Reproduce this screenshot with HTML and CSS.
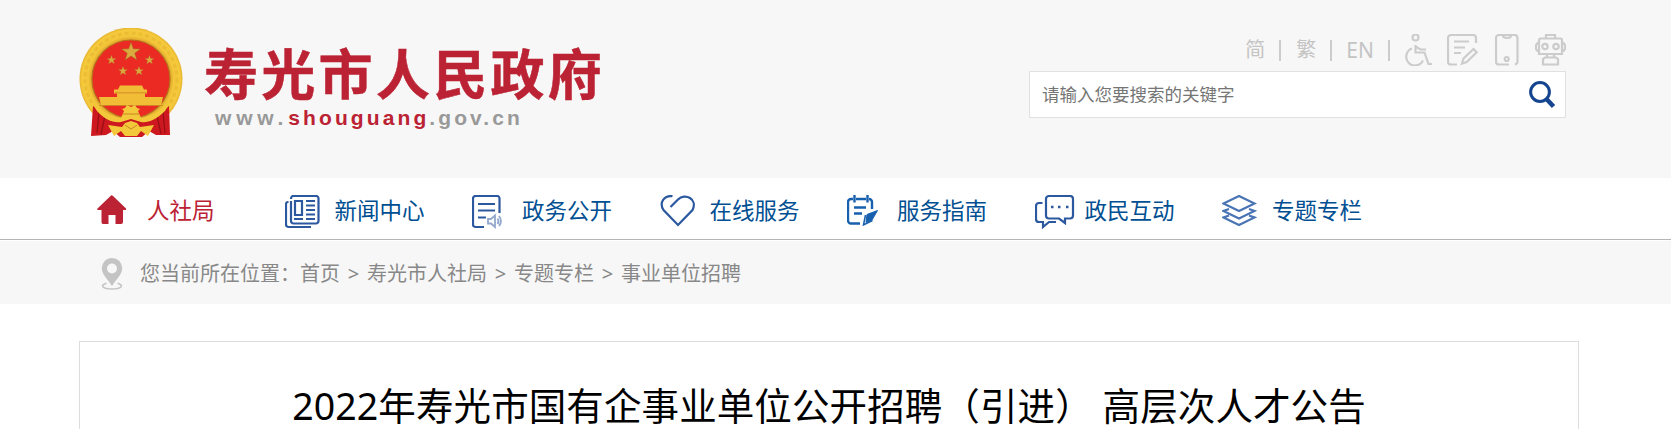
FILE: index.html
```html
<!DOCTYPE html>
<html lang="zh-CN">
<head>
<meta charset="utf-8">
<title>2022年寿光市国有企事业单位公开招聘</title>
<link rel="stylesheet" href="styles.css">
</head>
<body>
<header class="header">
  <div class="wrap header-row">
    <a class="logo">
      <svg class="emblem" viewBox="0 0 104 110" width="104" height="110">
        <defs>
          <radialGradient id="gold" gradientUnits="userSpaceOnUse" cx="52" cy="51" r="52"><stop offset=".75" stop-color="#dca22a"/><stop offset=".82" stop-color="#f3c63a"/><stop offset=".94" stop-color="#f5ca3c"/><stop offset="1" stop-color="#e3b02e"/></radialGradient>
          <path id="star" d="M0-10 2.4-3.2 9.5-3.1 3.8 1.2 5.9 8.1 0 4 -5.9 8.1 -3.8 1.2 -9.5-3.1 -2.4-3.2Z"/>
        </defs>
        <circle cx="52" cy="51" r="51.5" fill="url(#gold)"/>
        <circle cx="52" cy="51" r="46" fill="none" stroke="#e0aa27" stroke-width="3" stroke-dasharray="4 3" opacity=".4"/>
        <circle cx="52" cy="51" r="39" fill="#ec2a24" stroke="#b5701c" stroke-width="1.200"/>
        <g fill="#d9aa40" stroke="#a8571d" stroke-width=".5">
          <use href="#star" transform="translate(52 24)"/>
          <use href="#star" transform="translate(32.500 32) scale(.5)"/>
          <use href="#star" transform="translate(70.500 32) scale(.5)"/>
          <use href="#star" transform="translate(44 43) scale(.5)"/>
          <use href="#star" transform="translate(60 43) scale(.5)"/>
        </g>
        <path d="M41 57.500h22l2 4h3v4H35v-4h4zM38 65h28v5H38zM20 69h64l-2 8.500H22z" fill="#f2bd36"/>
        <path d="M36 64.800h32M20 77.500h64" stroke="#c9821f" stroke-width=".8"/>
        <path d="M14 78C22 86 33 91 45 92L52 88 59 92C71 91 82 86 90 78L91 107H77L70 103 63 109H41L34 103 27 107 12 108Z" fill="#cc181e"/>
        <path d="M20 84l-2 21M26 88l-4 18M84 84l2 21M78 88l4 18" stroke="#970f16" stroke-width="1.200"/>
        <path d="M13 75C23 84 32 88 42 90L45 83 43 81 46 80 48 77 52 79 56 77 58 80 61 81 59 83 62 90C72 88 81 84 91 75L86 83C77 92 69 95 62 94L52 91 42 94C34 95 26 92 18 83Z" fill="#f4c83b"/>
        <path d="M52 93l6 2 3 4 14-2-6 11-7-5-4 5H46l-4-5-7 5-6-11 14 2 3-4z" fill="#f4c83b"/>
        <path d="M46 97l6 4 6-4M44 86h16" fill="none" stroke="#c78623"/>
      </svg>
      <span class="logo-text">
        <span class="logo-name">寿光市人民政府</span>
        <span class="logo-url"><span>www.</span><b>shouguang</b>.gov.cn</span>
      </span>
    </a>
    <div class="tools">
      <div class="tool-links">
        <a>简</a><i></i><a>繁</a><i></i><a class="en">EN</a><i></i>
        <svg class="wheel" width="28" height="32" viewBox="0 0 28 32"><circle cx="10.500" cy="3.500" r="3"/><path d="M10.500 11v7.500h9l4 11.500h3.500M10.500 12.500l5 3h5.500M7 14.500a8.800 8.800 0 1 0 11 12"/></svg>
        <svg class="note" width="31" height="32" viewBox="0 0 31 32"><path d="M10 30.500H4a3 3 0 0 1-3-3V4a3 3 0 0 1 3-3h22a3 3 0 0 1 3 3v5M7 7.500h15M7 13.500h11M7 19h7M15 29.500l1.500-5 10-9.500 3.200 3.300-10 9.700z"/></svg>
        <svg class="phone" width="24" height="32" viewBox="0 0 24 32"><path d="M14 30.500H4a3 3 0 0 1-3-3V4a3 3 0 0 1 3-3h15.500a3 3 0 0 1 3 3v23.500a3 3 0 0 1-2.500 3M8 1.500q0 2.500 4 2.500t4-2.500"/><circle cx="11.700" cy="25" r="2"/></svg>
        <svg width="31" height="32" viewBox="0 0 31 32"><path d="M5.500 4.500h20a1.500 1.500 0 0 1 1.500 1.500v14H4V6a1.500 1.500 0 0 1 1.500-1.500zM11 4V1h9v3M4 9H2.500L1 11v4l1.500 2H4M27 9h1.500L30 11v4l-1.500 2H27M12 20v3.500M19 20v3.500M8 30.500V25l2-1.500h11l2 1.500v5.500z"/><circle cx="10" cy="12.500" r="2.700"/><circle cx="21" cy="12.500" r="2.700"/></svg>
      </div>
      <div class="search">
        <span>请输入您要搜索的关键字</span>
        <svg width="27" height="28" viewBox="0 0 27 28"><circle cx="11" cy="11" r="9.400" fill="none" stroke="#15458f" stroke-width="3"/><path d="M18 18.500l6.500 7" stroke="#15458f" stroke-width="4.500"/></svg>
      </div>
    </div>
  </div>
</header>
<nav class="nav">
  <div class="wrap nav-row">
    <a class="nav-item active"><svg width="40" height="34" viewBox="0 0 40 34"><path d="M14 .5Q15 0 16 1L29 13.500q.5 1.500-1 1.500H26v12q0 2-2 2h-5.500v-9h-7v9H6q-1.500 0-1.500-2V15H1q-1.500-.5-.5-1.500L13 1.500Z" fill="#bb2233"/></svg>人社局</a>
    <a class="nav-item"><svg width="40" height="34" viewBox="0 0 40 34"><path d="M6 4V3.500A2.500 2.500 0 0 1 8.500 1H31a2.500 2.500 0 0 1 2.500 2.500V26a2.500 2.500 0 0 1-2.500 2.500H8.500A2.500 2.500 0 0 1 6 26V6M3.500 7H3a2 2 0 0 0-2 2v20.500A2.500 2.500 0 0 0 3.500 32H26M10 6h7v14h-7zM21 6h9M21 10.500h9M21 15h9M21 19.500h9M9 24h9M21 24h9"/></svg>新闻中心</a>
    <a class="nav-item"><svg width="40" height="34" viewBox="0 0 40 34"><path d="M12 32H3.500A2.500 2.500 0 0 1 1 29.500v-26A2.500 2.500 0 0 1 3.500 1H25a2.500 2.500 0 0 1 2.500 2.500V18M6 9h17M6 15.500h17M6 22.500h8"/><path class="faint" d="M16 24h3l4-3.500V32l-4-3.500h-3zM25.500 23.500q2 3 0 5.500M27 21q4 5.500 0 10"/></svg>政务公开</a>
    <a class="nav-item"><svg width="40" height="34" viewBox="0 0 40 34"><path d="M10.500 12L18 4.500C25-2.500 38 4 32.500 15L18 30 3.500 15C-1.500 7 5 0 12.500 1.200"/></svg>在线服务</a>
    <a class="nav-item"><svg class="bright" width="40" height="34" viewBox="0 0 40 34"><path d="M13 28.500H4A3 3 0 0 1 1 25.500V7a3 3 0 0 1 3-3h2M9 4h10M22 4a3 3 0 0 1 3 3v7M7.500 0v7.500M20.500 0v7.500M7 12.500h12M7 18.500h8"/><path d="M30.500 15.500L25 25l-6 2.500 1-8z" fill="#1760ad" stroke-width="1"/><path d="M18.500 20L16.500 30l9-4.500" stroke-width="1.500"/></svg>服务指南</a>
    <a class="nav-item"><svg class="chat" width="40" height="34" viewBox="0 0 40 34"><path d="M14 1h21a3 3 0 0 1 3 3v16.500a3 3 0 0 1-3 3h-5V28l-6-4.500H14a3 3 0 0 1-3-3V4a3 3 0 0 1 3-3zM7.500 8H4a3 3 0 0 0-3 3v13a3 3 0 0 0 3 3h4v5l6-5h7"/><path d="M16 12h2.500M23 12h2.500M31 12h2.500" stroke-width="2.500"/></svg>政民互动</a>
    <a class="nav-item"><svg class="layers" width="40" height="34" viewBox="0 0 40 34"><path d="M17 1L32.500 8.500 17 16 1.500 8.500zM7 14l-5.500 2L17 23.500 32.500 16 27 14M7 20.500l-5.500 2L17 30l15.500-7.500-5.500-2"/></svg>专题专栏</a>
  </div>
</nav>
<div class="crumbs">
  <div class="wrap crumbs-row">
    <svg width="22" height="32" viewBox="0 0 22 32"><path d="M11 0a10.200 10.200 0 0 1 10.200 10.500c0 6-6.200 11-10.200 17.500C7 21.500.8 16.500.8 10.500A10.200 10.200 0 0 1 11 0zm0 5.500a5 5 0 1 0 0 10 5 5 0 0 0 0-10z" fill="#c4c4c4"/><path d="M5.500 25.300C-2 27.500 2 31 11 31s13-3.500 5.500-5.700" fill="none" stroke="#c4c4c4" stroke-width="1.600"/></svg>
    <span>您当前所在位置：</span><a>首页</a><i>&gt;</i><a>寿光市人社局</a><i>&gt;</i><a>专题专栏</a><i>&gt;</i><a>事业单位招聘</a>
  </div>
</div>
<main class="wrap article">
  <h1>2022年寿光市国有企事业单位公开招聘（引进） 高层次人才公告</h1>
</main>
</body>
</html>
```
FILE: styles.css
```css
* { box-sizing: border-box; }
body {
  margin: 0;
  background: #fff;
  font-family: "Noto Sans", "Noto Sans CJK SC", sans-serif;
}
svg { display: block; flex: none; }
i { font-style: normal; }
.wrap { width: 1500px; margin-left: 79px; }

.header { height: 178px; background: #f7f7f7; }
.header-row { display: flex; justify-content: space-between; padding-right: 13px; }
.logo { display: flex; padding-top: 28px; }
.logo-text { display: flex; flex-direction: column; padding: 14px 0 0 21px; }
.logo-name {
  font: 700 54px/60px "Noto Sans CJK SC", sans-serif;
  letter-spacing: 3.3px;
  color: #bb2233;
  -webkit-text-stroke: .5px #bb2233;
}
.logo-url {
  margin-top: 4px;
  padding-left: 11px;
  font: bold 21px/24px "Liberation Sans", sans-serif;
  letter-spacing: 3.1px;
  color: #999;
}
.logo-url span { letter-spacing: 4.8px; }
.logo-url b { color: #bb2233; }

.tools { width: 537px; padding-top: 34px; }
.tool-links {
  display: flex;
  justify-content: flex-end;
  height: 37px;
  font-size: 20px;
  line-height: 32px;
  color: #c4c4c4;
}
.tool-links i { width: 2px; height: 21px; margin: 6px 15px 0 14px; background: #ccc; }
.tool-links .en { font-size: 21px; margin-left: -1px; }
.tool-links svg { fill: none; stroke: #ccc; stroke-width: 2.2; }
.tool-links .wheel { margin-right: 14px; }
.tool-links .note { margin-right: 17px; }
.tool-links .phone { margin-right: 16px; }
.search {
  display: flex;
  align-items: center;
  justify-content: space-between;
  height: 47px;
  padding: 0 9px 2px 12px;
  border: 1px solid #e1e1e1;
  background: #fff;
  color: #757575;
  font-size: 17.5px;
}
.search svg { margin-top: 2px; }

.nav { height: 62px; border-bottom: 1px solid #b5b5b5; background: #fff; }
.nav-row { display: flex; padding-left: 18px; }
.nav-item {
  display: flex;
  flex: none;
  gap: 10px;
  width: 187.5px;
  padding-top: 17px;
  font-size: 22.5px;
  line-height: 31px;
  color: #004f92;
}
.nav-item svg { fill: none; stroke: #2c589f; stroke-width: 2.2; }
.nav-item.active { color: #bb2233; }
.nav-item.active svg { stroke: none; }
.nav-item .bright { stroke: #1760ad; stroke-width: 2.4; }
.nav-item .layers { stroke: #4a74b4; }
.nav-item .faint { stroke: #92a8cd; stroke-width: 1.8; }

.crumbs { height: 63px; margin-top: 1px; background: #f7f7f7; }
.crumbs-row { display: flex; padding: 17px 0 0 22px; font-size: 20px; line-height: 31px; color: #888; }
.crumbs-row svg { margin-right: 17px; }
.crumbs-row i { width: 27px; text-align: center; }

.article { height: 88px; margin-top: 37px; padding-top: 41px; border: solid #ddd; border-width: 1px 1px 0; }
.article h1 { height: 46px; margin: 0; overflow: hidden; font-size: 37.5px; font-weight: 400; line-height: 46px; letter-spacing: .1px; text-align: center; color: #000; white-space: nowrap; }
```
